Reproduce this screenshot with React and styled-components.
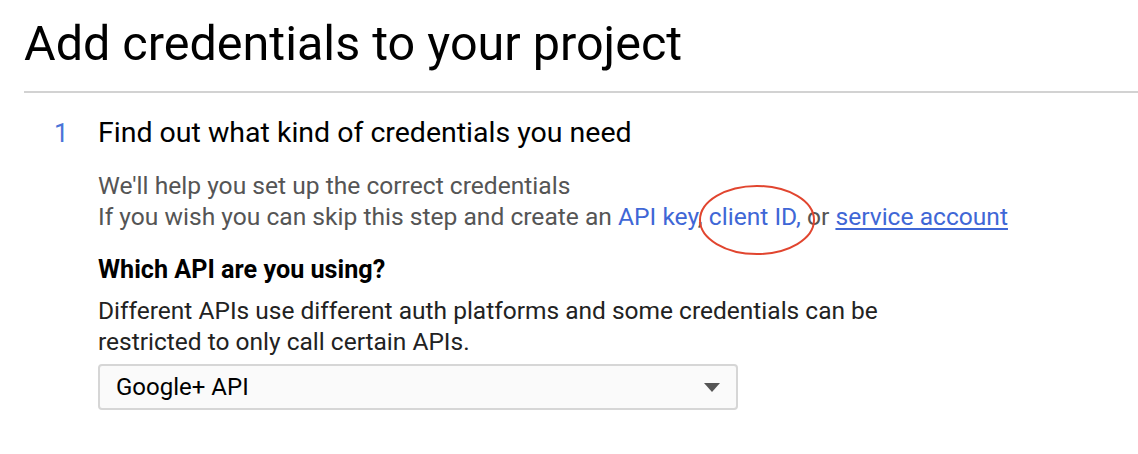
import React from 'react'
import styled, { createGlobalStyle } from 'styled-components'

const GlobalStyle = createGlobalStyle`
  body {
    margin: 0;
    background: #fff;
    font-family: Roboto, "Liberation Sans", sans-serif;
  }
`

const Page = styled.div`
  padding: 12px 0 0 24px;
`

const Title = styled.h1`
  margin: 0;
  font-size: 48.5px;
  font-weight: 400;
  line-height: 64px;
  color: #000;
`

const Divider = styled.hr`
  margin: 15px 0 0 0;
  border: 0;
  height: 2px;
  background: #d2d2d2;
`

const Step = styled.section`
  display: grid;
  grid-template-columns: 74px 1fr;
  padding: 22px 0 0 0;
`

const StepNumber = styled.div`
  padding-left: 30px;
  font-size: 26px;
  line-height: 36px;
  color: #4a74d8;
`

const StepBody = styled.div`
  display: flex;
  flex-direction: column;
`

const StepTitle = styled.h2`
  margin: 0;
  font-size: 28.5px;
  font-weight: 400;
  line-height: 36px;
  color: #000;
`

const Hint = styled.p`
  margin: 19px 0 0 0;
  font-size: 24.6px;
  line-height: 31px;
  color: #555;
`

const LinkWrap = styled.span`
  position: relative;
`

const Link = styled.a`
  color: #3f67d6;
  text-decoration: ${p => (p.$underline ? 'underline' : 'none')};
  text-underline-offset: 3px;
  cursor: pointer;
`

const Circle = styled.svg`
  position: absolute;
  left: -10px;
  top: -17px;
  pointer-events: none;
  overflow: visible;
`

const Question = styled.h3`
  margin: 22px 0 0 0;
  font-size: 25.2px;
  font-weight: 700;
  line-height: 31px;
  color: #000;
`

const Explain = styled.p`
  margin: 10px 0 0 0;
  font-size: 24.5px;
  line-height: 31px;
  color: #222;
  max-width: 800px;
`

const Select = styled.div`
  display: flex;
  align-items: center;
  justify-content: space-between;
  box-sizing: border-box;
  width: 640px;
  height: 46px;
  margin-top: 7px;
  padding: 0 16px;
  border: 2px solid #d6d6d6;
  border-radius: 4px;
  background: #fafafa;
  font-size: 24px;
  color: #000;
`

const Caret = styled.span`
  width: 0;
  height: 0;
  border-left: 8px solid transparent;
  border-right: 8px solid transparent;
  border-top: 9px solid #555;
`

export default function App() {
  return (
    <Page>
      <GlobalStyle />
      <Title>Add credentials to your project</Title>
      <Divider />
      <Step>
        <StepNumber>1</StepNumber>
        <StepBody>
          <StepTitle>Find out what kind of credentials you need</StepTitle>
          <Hint>
            We'll help you set up the correct credentials
            <br />
            If you wish you can skip this step and create an <Link>API key</Link>,{' '}
            <LinkWrap>
              <Link>client ID,</Link>
              <Circle width="116" height="70" viewBox="0 0 116 70">
                <ellipse cx="58" cy="35" rx="57" ry="34" fill="none" stroke="#e1452f" strokeWidth="2" />
              </Circle>
            </LinkWrap>{' '}
            or <Link $underline>service account</Link>
          </Hint>
          <Question>Which API are you using?</Question>
          <Explain>
            Different APIs use different auth platforms and some credentials can be restricted to only
            call certain APIs.
          </Explain>
          <Select>
            Google+ API
            <Caret />
          </Select>
        </StepBody>
      </Step>
    </Page>
  )
}
